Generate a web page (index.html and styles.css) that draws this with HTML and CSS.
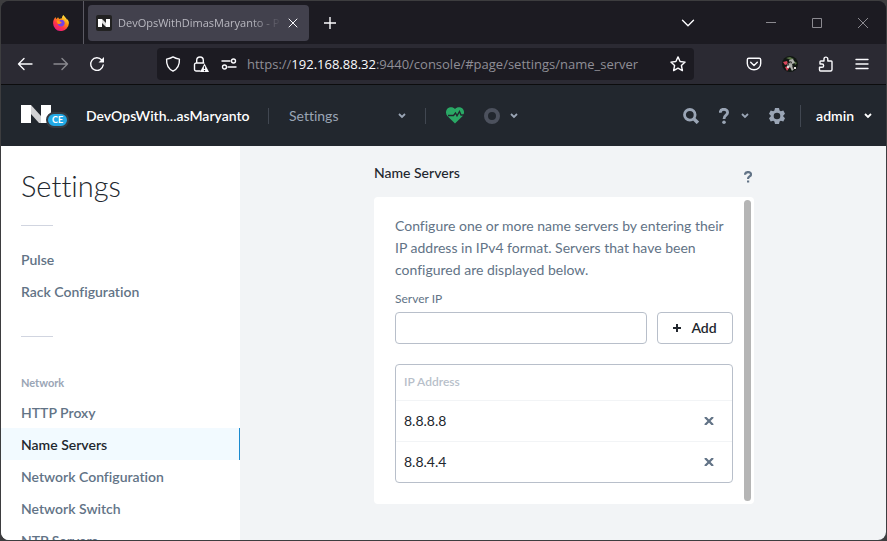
FILE: index.html
```html
<!DOCTYPE html>
<html lang="en">
<head>
<meta charset="utf-8">
<title>DevOpsWithDimasMaryanto - Prism</title>
<link rel="stylesheet" href="styles.css">
</head>
<body>
<div class="window">
  <div class="tabstrip">
    <button class="ff" aria-label="Firefox View">
      <svg width="16" height="16" viewBox="0 0 16 16">
        <defs>
          <linearGradient id="fire" x1="0.85" y1="0.05" x2="0.2" y2="1"><stop offset="0" stop-color="#fff44f"/><stop offset="0.35" stop-color="#ff980e"/><stop offset="0.65" stop-color="#ff3647"/><stop offset="1" stop-color="#e31587"/></linearGradient>
        </defs>
        <path fill="url(#fire)" d="M15.6 6.2C15.2 5.200 14.400 4.200 13.800 3.800 14.200 4.600 14.300 5 14.300 5.200 13.300 2.900 11.700 1.900 10.400 0C9.200 1 8.900 2.300 9 3.200 8 3.200 7.200 3.500 6.500 4 5.700 3.600 5.300 3 5.200 2.300 4.500 2.700 4 3.300 3.700 3.900 3.200 3.800 2.700 3 2.600 1.900 1 3.200 0.100 5.700 0.100 8A7.900 7.900 0 0 0 15.900 8.300C15.900 7.500 15.800 6.700 15.600 6.200Z"/>
        <path fill="#7542e5" d="M8.200 4.800C10.400 4.800 11.800 6.500 11.700 8.300 11.500 10.400 9.900 11.600 8 11.500 6 11.400 4.700 9.900 4.600 8.300 5.200 9 6.300 9.200 7 8.700 7.700 8.200 8.400 8.300 8.500 8 8.500 7.500 7.600 7.200 6.400 7.100 6.200 6 6.700 5.200 8.200 4.800Z"/>
        <path fill="#ff980e" d="M3.700 5.900C4.600 5.400 5.700 5.600 6.400 6.200 7.100 6.700 8.700 6.900 8.600 7.600 8.400 8.200 7.200 8.100 6.600 8.700 5.900 9.300 4.500 8.800 4.200 7.700Z"/>
      </svg>
    </button>
    <div class="tab">
      <svg width="16" height="16" viewBox="0 0 16 16"><rect width="16" height="16" rx="2" fill="#222"/><path fill="#fff" d="M2 4h4v8H2zM10 4h4v8h-4z"/><path fill="#ddd" d="M6 4l4 4v4L6 8z"/></svg>
      <span class="tab-title">DevOpsWithDimasMaryanto - P</span>
      <button aria-label="Close tab"><svg width="10" height="10" viewBox="0 0 10 10"><path class="line" d="M1 1l8 8M9 1l-8 8"/></svg></button>
    </div>
    <button class="newtab" aria-label="New tab"><svg width="12" height="12" viewBox="0 0 12 12"><path class="line wide" d="M6 0v12M0 6h12"/></svg></button>
    <button class="alltabs" aria-label="List all tabs"><svg width="14" height="8" viewBox="0 0 14 8"><path class="line wide" d="M1.500 1.200L7 6.700l5.500-5.500"/></svg></button>
    <div class="winctl">
      <button aria-label="Minimize"><svg width="10" height="10" viewBox="0 0 10 10"><path d="M0 4.500h10"/></svg></button>
      <button aria-label="Maximize"><svg width="10" height="10" viewBox="0 0 10 10"><path d="M.5 .5h9v9h-9z"/></svg></button>
      <button aria-label="Close"><svg width="10" height="10" viewBox="0 0 10 10"><path d="M0 0l10 10M10 0L0 10"/></svg></button>
    </div>
  </div>

  <div class="toolbar">
    <div class="nav">
      <button aria-label="Back"><svg width="16" height="16" viewBox="0 0 16 16"><path class="line wide" d="M15 8H1.500M7 2.500L1.500 8 7 13.500"/></svg></button>
      <button class="off" aria-label="Forward"><svg width="16" height="16" viewBox="0 0 16 16"><path class="line wide" d="M1 8h13.500M9 2.500L14.500 8 9 13.500"/></svg></button>
      <button aria-label="Reload"><svg width="16" height="16" viewBox="0 0 16 16"><path class="line wide" d="M14.200 9A6.300 6.300 0 1 1 12.800 4"/><path fill="#fbfbfe" d="M15 1v5.500H9.500z"/></svg></button>
    </div>
    <div class="urlbar">
      <svg width="16" height="16" viewBox="0 0 16 16"><path class="line wide" d="M8 .9c2 1.300 4 1.900 6.400 2.200.3 5.400-1.400 9.600-6.400 12-5-2.400-6.700-6.600-6.400-12C4 2.800 6 2.200 8 .9z"/></svg>
      <svg width="16" height="16" viewBox="0 0 16 16"><path class="line wide" d="M3.700 7V4.300a3.300 3.300 0 0 1 6.600 0V7M7 15H3.200A1.700 1.700 0 0 1 1.500 13.300V8.700A1.700 1.700 0 0 1 3.200 7h7.600"/><path fill="#fbfbfe" d="M11.500 7.500L16 16H7z"/><path stroke="#1c1b22" stroke-width="1.200" d="M11.500 10.300v2.800M11.500 14v1.200"/></svg>
      <svg width="16" height="16" viewBox="0 0 16 16"><g class="line wide"><path d="M1 5h8M7 11h8"/><circle cx="12.500" cy="5" r="2"/><circle cx="3.500" cy="11" r="2"/></g></svg>
      <div class="url" role="textbox" contenteditable="true" aria-label="Address" spellcheck="false">https://<b>192.168.88.32</b>:9440/console/#page/settings/name_server</div>
      <button aria-label="Bookmark"><svg width="16" height="16" viewBox="0 0 16 16"><path class="line wide" d="M8 .9l2.100 4.600 5 .6-3.700 3.400 1 5.100L8 12.100l-4.400 2.500 1-5.100L.9 6.100l5-.6z"/></svg></button>
    </div>
    <div class="tools">
      <button aria-label="Pocket"><svg width="16" height="16" viewBox="0 0 16 16"><path class="line wide" d="M2.800 2.300h10.400q1.500 0 1.500 1.500V7.500a6.700 6.300 0 0 1-13.400 0V3.800q0-1.500 1.500-1.500zM4.700 6.200L8 9.400l3.300-3.200"/></svg></button>
      <button aria-label="Account"><svg width="16" height="16" viewBox="0 0 16 16"><circle cx="8" cy="8" r="8" fill="#111713"/><path fill="#577045" d="M4 2l4-1 4 2-3 1zM12 5l3 2-2 2z"/><path fill="#aeb0ac" d="M7 4l4-1 2 4-3 1 2 5-2 2-2-4-2 2-1-5 3-1z"/><path fill="#d9455b" d="M1 6l4-1 1 3-3 1zM3 11l3-1 1 2-2 3z"/><path fill="#222" d="M8 5l2 1-1 2zM10 9l3 3-2 1zM5 7l2 1-1 2z"/><path fill="#e2dcdc" d="M5 10h2v2H5zM12 11h2v2h-2z"/></svg></button>
      <button aria-label="Extensions"><svg width="16" height="16" viewBox="0 0 16 16"><path class="line wide" d="M2.500 15h10q1.500 0 1.500-1.500V5.800q0-.8-.8-.8H9.800V3a1.900 1.900 0 0 0-3.800 0v2H2.800q-.8 0-.8.800V8h2a1.600 1.600 0 0 1 0 3.300H1.500v2.500q0 1.200 1 1.200z"/></svg></button>
      <button aria-label="Menu"><svg width="16" height="16" viewBox="0 0 16 16"><path class="line wide" d="M2 3.500h12M2 8h12M2 12.500h12"/></svg></button>
    </div>
  </div>

  <header class="topbar">
    <a class="logo" href="#" aria-label="Home">
      <svg width="48" height="24" viewBox="0 0 48 24"><path fill="#fff" d="M0 1h10v18H0zM20 1h10v18H20z"/><path fill="#d2d2d4" d="M10 1l10 11v7h-2L10 10z"/><rect x="26" y="9" width="21" height="14" rx="7" fill="#22a9e6" stroke="#363b42" stroke-width="2"/></svg>
      <span class="ce">CE</span>
    </a>
    <button class="cluster">DevOpsWith...asMaryanto</button>
    <span class="sep"></span>
    <label class="page-select"><select aria-label="Page"><option>Settings</option></select><svg class="chev" width="8" height="6" viewBox="0 0 8 6"><path d="M1 1l3 3 3-3"/></svg></label>
    <span class="sep"></span>
    <button class="health" aria-label="Health"><svg width="18" height="17" viewBox="0 0 18 17"><path fill="#2aa865" d="M9 2C11-.5 14.500-.2 16.500 1.500 18.500 3.500 18.500 6.500 16.700 9L9 16.500 1.300 9C-.5 6.500-.5 3.500 1.500 1.500 3.500-.2 7-.5 9 2z"/><path fill="none" stroke="#22272e" stroke-width="1.300" d="M2 8.500h5.500L9.500 6l1.500 2.800L13.500 4.500 15 8h3"/></svg></button>
    <button class="tasks" aria-label="Tasks"><svg width="16" height="16" viewBox="0 0 16 16"><circle cx="8" cy="8" r="6" fill="none" stroke="#4c515d" stroke-width="4"/></svg><svg class="chev" width="8" height="6" viewBox="0 0 8 6"><path d="M1 1l3 3 3-3"/></svg></button>
    <div class="right">
      <button aria-label="Search"><svg width="16" height="16" viewBox="0 0 16 16"><circle cx="6.800" cy="6.800" r="5.300" fill="none" stroke="#9aa5b5" stroke-width="2.800"/><path stroke="#9aa5b5" stroke-width="3.400" d="M10.500 10.500l4.400 4.400"/></svg></button>
      <button class="help" aria-label="Help"><svg width="10" height="16" viewBox="0 0 10 16"><path fill="none" stroke="#9aa5b5" stroke-width="2.800" d="M1.200 4.800C1.300 0 8.600.2 8.600 4.600 8.600 7.500 5 7 5 11"/><circle cx="5" cy="14.200" r="1.800" fill="#9aa5b5"/></svg><svg class="chev" width="8" height="6" viewBox="0 0 8 6"><path d="M1 1l3 3 3-3"/></svg></button>
      <button aria-label="Settings"><svg width="16" height="16" viewBox="0 0 16 16"><path fill="#9aa5b5" fill-rule="evenodd" d="M6 0h4l.6 2.500 1.200.7 2.500-.7L16 5.700l-1.700 1.700v1.200L16 10.300l-1.700 3.200-2.500-.7-1.200.7L10 16H6l-.6-2.500-1.200-.7-2.500.7L0 10.300l1.700-1.700V7.400L0 5.700l1.700-3.200 2.500.7 1.200-.7zM8 4.700a3.300 3.300 0 1 0 0 6.600 3.300 3.300 0 0 0 0-6.600z"/></svg></button>
      <span class="sep tall"></span>
      <button class="user">admin<svg class="chev" width="8" height="6" viewBox="0 0 8 6"><path d="M1 1l3 3 3-3"/></svg></button>
    </div>
  </header>

  <div class="content">
    <nav class="sidebar">
      <h1>Settings</h1>
      <hr>
      <a href="#">Pulse</a>
      <a href="#">Rack Configuration</a>
      <hr class="second">
      <h2>Network</h2>
      <a href="#">HTTP Proxy</a>
      <a href="#" class="current">Name Servers</a>
      <a href="#">Network Configuration</a>
      <a href="#">Network Switch</a>
      <a href="#">NTP Servers</a>
    </nav>
    <main>
      <section class="panel">
        <div class="panel-head">
          <h2>Name Servers</h2>
          <button aria-label="Help"><svg width="8" height="12" viewBox="0 0 8 12"><path fill="none" stroke="#627386" stroke-width="2.200" d="M1 3.800C1 .2 7 .2 7 3.400 7 5.600 4 5.400 4 8"/><path fill="#627386" d="M3 9.500h2.200v2H3z"/></svg></button>
        </div>
        <div class="card">
          <div class="card-body">
            <p>Configure one or more name servers by entering their IP address in IPv4 format. Servers that have been configured are displayed below.</p>
            <label class="field-label" for="ip">Server IP</label>
            <form class="row">
              <input id="ip" type="text">
              <button type="button" class="add"><svg width="8" height="8" viewBox="0 0 8 8"><path stroke="#22272e" stroke-width="2" d="M4 0v8M0 4h8"/></svg>Add</button>
            </form>
            <div class="table-box">
              <table>
                <thead><tr><th colspan="2">IP Address</th></tr></thead>
                <tbody>
                  <tr><td>8.8.8.8</td><td class="act"><button aria-label="Remove 8.8.8.8"><svg width="10" height="8" viewBox="0 0 10 8"><path d="M1 0l8 8M9 0L1 8"/></svg></button></td></tr>
                  <tr><td>8.8.4.4</td><td class="act"><button aria-label="Remove 8.8.4.4"><svg width="10" height="8" viewBox="0 0 10 8"><path d="M1 0l8 8M9 0L1 8"/></svg></button></td></tr>
                </tbody>
              </table>
            </div>
          </div>
          <div class="scroll"></div>
        </div>
      </section>
    </main>
  </div>
</div>
</body>
</html>
```
FILE: styles.css
```css
* { box-sizing: border-box; }
body {
  margin: 0;
  height: 100vh;
  padding: 1px;
  background: #3d3d3f;
  font: 14px/20px Lato, "Open Sans", sans-serif;
  font-variant-ligatures: none;
  color: #22272e;
}
button, input, select { font: inherit; color: inherit; }
button { display: flex; align-items: center; padding: 0; border: 0; background: none; }
svg { display: block; flex: none; }
a { color: inherit; text-decoration: none; }
h1, h2, p { margin: 0; }
.line { fill: none; stroke: #fbfbfe; stroke-width: 1; stroke-linecap: round; stroke-linejoin: round; }
.line.wide { stroke-width: 1.4; }

.window { height: 100%; display: flex; flex-direction: column; overflow: hidden; border-radius: 8px; background: #22272e; }

/* Browser chrome */
.tabstrip { flex: none; height: 43px; display: flex; align-items: center; background: #1c1b22; font: 11px/16px "Open Sans", sans-serif; }
.ff { height: 100%; padding: 0 14px 0 52px; border-right: 1px solid #5b5a63; }
.tab { display: flex; align-items: center; gap: 6px; width: 221px; height: 36px; margin-left: 4px; padding: 0 11px 0 8px; border-radius: 4px; background: #42414d; color: #b9b8c0; }
.tab-title { flex: 1; overflow: hidden; white-space: nowrap; -webkit-mask-image: linear-gradient(to left, transparent, #000 32px); mask-image: linear-gradient(to left, transparent, #000 32px); }
.newtab { margin-left: 15px; }
.alltabs { margin-left: auto; }
.winctl { display: flex; gap: 36px; margin: 0 18px 0 71px; }
.winctl path { fill: none; stroke: #8b8a90; }

.toolbar { flex: none; height: 41px; display: flex; align-items: center; background: #2b2a33; border-bottom: 1px solid #0c0c0d; }
.nav { display: flex; gap: 20px; padding: 0 52px 0 16px; }
.off { opacity: .45; }
.urlbar { flex: 1; min-width: 0; height: 32px; display: flex; align-items: center; gap: 12px; padding: 0 8px; border-radius: 4px; background: #1c1b22; }
.url { flex: 1; min-width: 0; overflow: hidden; white-space: nowrap; margin-left: -2px; font: 13px/20px "Open Sans", sans-serif; color: #8f8e96; }
.url b { font-weight: 400; color: #fbfbfe; }
.tools { display: flex; gap: 20px; padding: 0 16px 0 52px; }

/* Console header */
.topbar { flex: none; height: 61px; display: flex; align-items: center; padding: 0 14px 0 20px; }
.logo { position: relative; width: 48px; }
.ce { position: absolute; left: 31px; top: 10px; font-size: 9px; line-height: 12px; font-weight: 700; color: #fff; }
.cluster { width: 182px; padding-left: 17px; font-weight: 600; color: #fff; }
.sep { width: 1px; height: 16px; margin-left: 17px; background: #414751; }
.sep.tall { height: 22px; margin: 0 -1px 0 -1px; }
.page-select { display: flex; align-items: center; width: 136px; margin-left: 20px; padding-right: 19px; color: #9aa5b5; }
.page-select select { flex: 1; appearance: none; padding: 0; border: 0; background: none; }
.page-select + .sep { margin-left: 0; }
.chev path { fill: none; stroke: currentColor; stroke-width: 1.8; }
.health { margin-left: 20px; }
.tasks { gap: 10px; margin-left: 20px; color: #9aa5b5; }
.right { display: flex; align-items: center; gap: 16px; margin-left: auto; color: #9aa5b5; }
.help { gap: 12px; padding: 0 4px; }
.user { gap: 10px; color: #fff; font-weight: 600; }

/* Page */
.content { flex: 1; min-height: 0; display: grid; grid-template-columns: 239px 1fr; background: #f2f4f6; }
.sidebar { overflow: hidden; background: #fff; font-weight: 600; color: #627386; }
.sidebar h1 { padding: 22px 20px 21px; font-size: 29px; line-height: 36px; font-weight: 300; color: #22272e; }
.sidebar hr { width: 32px; height: 1px; margin: 0 20px 17px; border: 0; background: #d1d5e0; }
.sidebar .second { margin: 29px 20px 35px; }
.sidebar h2 { padding: 1px 20px 3px; font-size: 11px; line-height: 20px; font-weight: 700; color: #9aa5b5; }
.sidebar a { display: block; padding: 7px 20px 5px; }
.sidebar .current { background: #f2faff; border-right: 1px solid #1b8bd0; color: #22272e; }

main { overflow: hidden; padding: 17px 20px 0 22px; }
.panel { max-width: 380px; margin: 0 auto; }
.panel-head { display: flex; justify-content: space-between; align-items: flex-end; margin-bottom: 14px; padding-right: 2px; }
.panel-head h2 { font-size: 14px; font-weight: 500; }
.card { display: flex; border-radius: 4px; background: #fff; padding: 3px 3px 3px 21px; }
.card-body { flex: 1; padding: 15px 11px 18px 0; }
.card p { line-height: 22px; color: #627386; }
.field-label { display: block; margin-top: 9px; font-size: 12px; line-height: 18px; color: #627386; }
.row { display: flex; gap: 10px; margin-top: 4px; }
.row input { flex: 1; min-width: 0; height: 32px; padding: 0 8px; border: 1px solid #b8bfca; border-radius: 4px; }
.add { width: 76px; height: 32px; justify-content: center; gap: 10px; border: 1px solid #b8bfca; border-radius: 4px; font-weight: 600; }
.table-box { margin-top: 20px; border: 1px solid #b8bfca; border-radius: 4px; }
table { width: 100%; border-collapse: collapse; }
th, td { height: 41px; padding: 0 8px; text-align: left; border-top: 1px solid #f2f4f6; }
th { height: 35px; border: 0; font-size: 12px; font-weight: 600; color: #b8bfca; }
.act { width: 36px; }
.act path { stroke: #627386; stroke-width: 2.2; }
.scroll { width: 7px; border-radius: 4px; background: #b5b5b5; }
```
